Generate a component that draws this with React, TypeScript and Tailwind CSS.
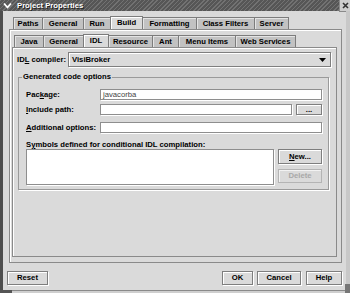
import React from "react";

function Tab({ label, w, selected }: { label: string; w: string; selected?: boolean }) {
  if (selected) {
    return (
      <div
        className={`${w} h-[13px] -ml-px relative z-10 flex items-center justify-center border border-b-0 border-[#7c7c7c] bg-[#dadada] shadow-[inset_1px_1px_0_#ffffff]`}
      >
        {label}
      </div>
    );
  }
  return (
    <div
      className={`${w} h-[12px] -ml-px flex items-center justify-center border border-b-0 border-[#7c7c7c] bg-[#c2c2c2] shadow-[inset_1px_1px_0_#e4e4e4]`}
    >
      {label}
    </div>
  );
}

function Btn({ w, h, children, disabled }: { w: string; h: string; children: React.ReactNode; disabled?: boolean }) {
  return (
    <div
      className={`${w} ${h} flex items-center justify-center border ${
        disabled
          ? "border-[#b4b4b4] text-[#a8a8a8] shadow-[inset_1px_1px_0_#f2f2f2]"
          : "border-[#7e7e7e] text-black shadow-[inset_1px_1px_0_#ffffff,1px_1px_0_#ffffff]"
      } bg-[#dadada]`}
    >
      {children}
    </div>
  );
}

function Field({ w, children }: { w: string; children?: React.ReactNode }) {
  return (
    <div
      className={`${w} h-[11px] flex items-center pl-[2px] bg-white border border-[#8e8e8e] shadow-[1px_1px_0_#ffffff] font-normal text-[#444]`}
    >
      {children}
    </div>
  );
}

export default function App() {
  return (
    <div className="w-[350px] h-[293px] bg-[#dadada] flex flex-col relative overflow-hidden font-['Liberation_Sans',Arial,sans-serif] text-[7.7px] font-bold text-black leading-none">
      {/* Title bar */}
      <div className="h-[11px] flex shrink-0">
        <div className="flex-1 flex items-center bg-[repeating-linear-gradient(135deg,#727272_0px,#727272_1px,#565656_1px,#565656_3px)]">
          <svg width="9" height="7" viewBox="0 0 9 7" className="ml-[3px]">
            <path d="M1 1.5 L4.5 5.5 L8 1.5" stroke="#ffffff" strokeWidth="1.8" fill="none" />
          </svg>
          <span className="ml-[5px] text-white [text-shadow:1px_1px_0_#222]">Project Properties</span>
        </div>
        <div className="w-[11px] h-[12px] bg-[#cfcfcf] border-l border-b border-[#8a8a8a] flex items-center justify-center">
          <svg width="7" height="7" viewBox="0 0 7 7">
            <path d="M1 1 L6 6 M6 1 L1 6" stroke="#333" strokeWidth="1.6" />
          </svg>
        </div>
      </div>

      {/* Body */}
      <div className="flex-1 flex flex-col border-l-[3px] border-l-[#4e4e4e] border-r-[4px] border-r-[#c8c8c8]">
        {/* Tab row 1 */}
        <div className="flex mt-[6px] ml-[11px] h-[12px] items-end">
          <Tab label="Paths" w="w-[30px]" />
          <Tab label="General" w="w-[42px]" />
          <Tab label="Run" w="w-[28px]" />
          <Tab label="Build" w="w-[33px]" selected />
          <Tab label="Formatting" w="w-[55px]" />
          <Tab label="Class Filters" w="w-[59px]" />
          <Tab label="Server" w="w-[35px]" />
        </div>
        {/* Outer panel */}
        <div className="ml-[6px] mr-[4px] h-[234px] border border-[#8a8a8a] shadow-[inset_1px_1px_0_#ffffff] flex flex-col pt-[5px] pl-[2px] pr-[4px] pb-[5px]">
          {/* Tab row 2 */}
          <div className="flex ml-[3px] h-[12px] items-end">
            <Tab label="Java" w="w-[30px]" />
            <Tab label="General" w="w-[41px]" />
            <Tab label="IDL" w="w-[26px]" selected />
            <Tab label="Resource" w="w-[45px]" />
            <Tab label="Ant" w="w-[27px]" />
            <Tab label="Menu Items" w="w-[58px]" />
            <Tab label="Web Services" w="w-[61px]" />
          </div>
          {/* Inner panel */}
          <div className="flex-1 border border-[#8a8a8a] shadow-[inset_1px_1px_0_#ffffff] flex flex-col pt-[4px] pl-[4px] pr-[5px]">
            <div className="flex items-center h-[15px]">
              <span className="w-[51px]">
                ID<span className="underline">L</span> compiler:
              </span>
              <div className="flex-1 h-[15px] flex items-center justify-between pl-[3px] pr-[4px] bg-[#dadada] border border-[#7e7e7e] shadow-[inset_1px_1px_0_#ffffff,1px_1px_0_#ffffff]">
                <span>VisiBroker</span>
                <svg width="7" height="4" viewBox="0 0 7 4">
                  <path d="M0 0 H7 L3.5 4 Z" fill="#000" />
                </svg>
              </div>
            </div>

            {/* Group box */}
            <fieldset className="ml-[1px] mr-[2px] mt-[6px] h-[117px] border border-[#9a9a9a] shadow-[1px_1px_0_#ffffff] pl-[7px] pr-[6px] pb-0 flex flex-col">
              <legend className="-ml-[4px] px-[1px] leading-[8px]">Generated code options</legend>
              <div className="flex items-center mt-[8px]">
                <span className="w-[74px]">
                  Pac<span className="underline">k</span>age:
                </span>
                <Field w="flex-1">javacorba</Field>
              </div>
              <div className="flex items-center mt-[4px]">
                <span className="w-[74px]">
                  <span className="underline">I</span>nclude path:
                </span>
                <Field w="flex-1" />
                <div className="ml-[4px]">
                  <Btn w="w-[26px]" h="h-[11px]">
                    ...
                  </Btn>
                </div>
              </div>
              <div className="flex items-center mt-[7px]">
                <span className="w-[74px]">
                  <span className="underline">A</span>dditional options:
                </span>
                <Field w="flex-1" />
              </div>
              <div className="mt-[8px] h-[8px]">
                S<span className="underline">y</span>mbols defined for conditional IDL compilation:
              </div>
              <div className="flex">
                <div className="flex-1 h-[36px] bg-white border border-[#8e8e8e] shadow-[1px_1px_0_#ffffff]" />
                <div className="ml-[4px] flex flex-col gap-[5px]">
                  <Btn w="w-[44px]" h="h-[15px]">
                    <span>
                      <span className="underline">N</span>ew...
                    </span>
                  </Btn>
                  <Btn w="w-[44px]" h="h-[14px]" disabled>
                    Delete
                  </Btn>
                </div>
              </div>
            </fieldset>
          </div>
        </div>

        {/* Bottom buttons */}
        <div className="flex mt-[8px] ml-[4px] mr-[4px]">
          <Btn w="w-[41px]" h="h-[14px]">Reset</Btn>
          <div className="flex-1" />
          <Btn w="w-[31px]" h="h-[14px]">OK</Btn>
          <div className="ml-[4px]">
            <Btn w="w-[44px]" h="h-[14px]">Cancel</Btn>
          </div>
          <div className="ml-[5px]">
            <Btn w="w-[36px]" h="h-[14px]">Help</Btn>
          </div>
        </div>
        <div className="flex-1" />
      </div>
      <div className="h-[3px] border-t border-[#8a8a8a] bg-[#cfcfcf] shrink-0" />
      <div className="absolute left-0 bottom-0 w-[12px] h-[3px] bg-[#555]" />
      <div className="absolute right-0 bottom-0 w-[5px] h-[9px] bg-[#777]" />
    </div>
  );
}
